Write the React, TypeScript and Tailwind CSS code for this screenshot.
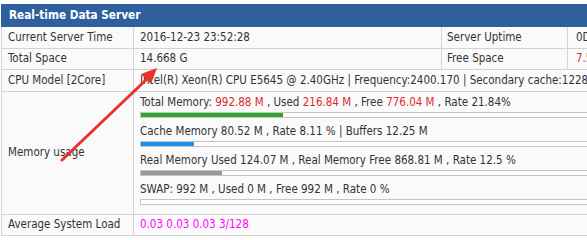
const font = { fontFamily: '"DejaVu Sans Condensed", "DejaVu Sans", sans-serif' };

const red = "text-[#dc2a30]";

function Bar({ pct, color }: { pct: number; color: string }) {
  return (
    <div className="mt-[3px] mb-[6px] h-[6px] w-[652px] border border-[#c4c4c4] bg-white">
      <div className={`h-full ${color}`} style={{ width: `${pct}%` }} />
    </div>
  );
}

export default function App() {
  return (
    <div
      className="relative w-[587px] h-[240px] overflow-hidden bg-white pt-[4px] pl-[1px] text-[11.5px] text-[#333] [font-stretch:condensed]"
      style={font}
    >
      <div className="w-[800px]">
        <div className="h-[23px] bg-[#2f5f9f] flex items-center pl-[8px] font-bold text-[11.7px] text-white">
          Real-time Data Server
        </div>
        <div className="border-l border-[#d3d3d3] bg-[#fafafa]">
          <div className="flex h-[22px] border-b border-[#d3d3d3]">
            <div className="w-[132px] border-r border-[#d3d3d3] flex items-center pl-[6px]">Current Server Time</div>
            <div className="w-[308px] border-r border-[#d3d3d3] flex items-center pl-[6px]">2016-12-23 23:52:28</div>
            <div className="w-[126px] border-r border-[#d3d3d3] flex items-center pl-[5px]">Server Uptime</div>
            <div className="flex-1 flex items-center pl-[8px]">0D 5H 27M</div>
          </div>
          <div className="flex h-[21px] border-b border-[#d3d3d3]">
            <div className="w-[132px] border-r border-[#d3d3d3] flex items-center pl-[6px]">Total Space</div>
            <div className="w-[308px] border-r border-[#d3d3d3] flex items-center pl-[6px]">14.668 G</div>
            <div className="w-[126px] border-r border-[#d3d3d3] flex items-center pl-[5px]">Free Space</div>
            <div className={`flex-1 flex items-center pl-[8px] ${red}`}>7.523 G</div>
          </div>
          <div className="flex h-[22px] border-b border-[#d3d3d3]">
            <div className="w-[132px] border-r border-[#d3d3d3] flex items-center pl-[6px]">CPU Model [2Core]</div>
            <div className="flex-1 flex items-center pl-[6px] whitespace-nowrap">
              Intel(R) Xeon(R) CPU E5645 @ 2.40GHz | Frequency:2400.170 | Secondary cache:12288 KB
            </div>
          </div>
          <div className="flex h-[123px] border-b border-[#d3d3d3]">
            <div className="w-[132px] border-r border-[#d3d3d3] flex items-center pl-[6px]">Memory usage</div>
            <div className="flex-1 pl-[6px] py-[3px] whitespace-nowrap">
              <div className="h-[14px] leading-[14px]">
                Total Memory: <span className={red}>992.88 M</span> , Used <span className={red}>216.84 M</span> , Free{" "}
                <span className={red}>776.04 M</span> , Rate 21.84%
              </div>
              <Bar pct={21.84} color="bg-[#2ea52e]" />
              <div className="h-[14px] leading-[14px]">Cache Memory 80.52 M , Rate 8.11 % | Buffers 12.25 M</div>
              <Bar pct={8.11} color="bg-[#1e90f0]" />
              <div className="h-[14px] leading-[14px]">
                Real Memory Used 124.07 M , Real Memory Free 868.81 M , Rate 12.5 %
              </div>
              <Bar pct={12.5} color="bg-[#999999]" />
              <div className="h-[14px] leading-[14px]">SWAP: 992 M , Used 0 M , Free 992 M , Rate 0 %</div>
              <Bar pct={0} color="bg-[#999999]" />
            </div>
          </div>
          <div className="flex h-[21px] border-b border-[#d3d3d3]">
            <div className="w-[132px] border-r border-[#d3d3d3] flex items-center pl-[6px]">Average System Load</div>
            <div className="flex-1 flex items-center pl-[6px] text-[#ff00ff]">0.03 0.03 0.03 3/128</div>
          </div>
        </div>
      </div>

      <svg className="absolute left-0 top-0 pointer-events-none" width="587" height="240" viewBox="0 0 587 240">
        <line x1="62" y1="160" x2="148" y2="78" stroke="#e8322a" strokeWidth="3" strokeLinecap="round" />
        <polygon points="157,68 151,84 141,74" fill="#e8322a" />
      </svg>
    </div>
  );
}
